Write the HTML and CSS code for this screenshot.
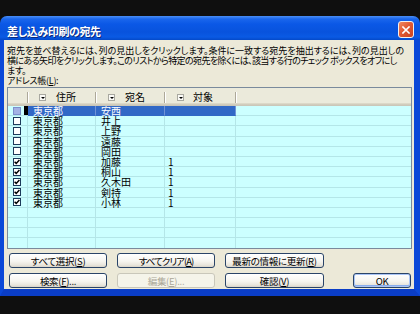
FILE: index.html
```html
<!DOCTYPE html>
<html lang="ja">
<head>
<meta charset="utf-8">
<title>差し込み印刷の宛先</title>
<link rel="stylesheet" href="styles.css">
</head>
<body>
<div class="screen">
  <div class="window">
    <div class="titlebar">
      <span class="title">差し込み印刷の宛先</span>
      <span class="close"><svg width="8" height="8" viewBox="0 0 8 8"><path d="M1 1L7 7M7 1L1 7" stroke="#fff" stroke-width="1.6" stroke-linecap="square"/></svg></span>
    </div>
    <div class="body">
      <p class="desc"><span class="ln1">宛先を並べ替えるには、列の見出しをクリックします。条件に一致する宛先を抽出するには、列の見出しの</span><br><span class="ln2">横にある矢印をクリックします。このリストから特定の宛先を除くには、該当する行のチェック ボックスをオフにし</span><br><span>ます。</span></p>
      <div class="label">アドレス帳(<u>L</u>):</div>
      <div class="list">
        <div class="head">
          <div class="hc"></div>
          <div class="hc h1"><span class="dd"></span><span>住所</span></div>
          <div class="hc h2"><span class="dd"></span><span>宛名</span></div>
          <div class="hc h3"><span class="dd"></span><span>対象</span></div>
          <div class="hc hlast"></div>
        </div>
        <div class="row sel">
          <div class="c c0"><span class="cb"></span><span class="bar"></span></div>
          <div class="c c1">東京都</div><div class="c c2">安西</div><div class="c c3"></div><div class="c c4"></div>
        </div>
        <div class="row">
          <div class="c c0"><span class="cb"></span></div>
          <div class="c c1">東京都</div><div class="c c2">井上</div><div class="c c3"></div><div class="c c4"></div>
        </div>
        <div class="row">
          <div class="c c0"><span class="cb"></span></div>
          <div class="c c1">東京都</div><div class="c c2">上野</div><div class="c c3"></div><div class="c c4"></div>
        </div>
        <div class="row">
          <div class="c c0"><span class="cb"></span></div>
          <div class="c c1">東京都</div><div class="c c2">遠藤</div><div class="c c3"></div><div class="c c4"></div>
        </div>
        <div class="row">
          <div class="c c0"><span class="cb"></span></div>
          <div class="c c1">東京都</div><div class="c c2">岡田</div><div class="c c3"></div><div class="c c4"></div>
        </div>
        <div class="row">
          <div class="c c0"><span class="cb"><svg width="6" height="6" viewBox="0 0 6 6"><path d="M0.6 2.8L2.2 4.4L5.4 1.1" fill="none" stroke="#000" stroke-width="1.5"/></svg></span></div>
          <div class="c c1">東京都</div><div class="c c2">加藤</div><div class="c c3">1</div><div class="c c4"></div>
        </div>
        <div class="row">
          <div class="c c0"><span class="cb"><svg width="6" height="6" viewBox="0 0 6 6"><path d="M0.6 2.8L2.2 4.4L5.4 1.1" fill="none" stroke="#000" stroke-width="1.5"/></svg></span></div>
          <div class="c c1">東京都</div><div class="c c2">桐山</div><div class="c c3">1</div><div class="c c4"></div>
        </div>
        <div class="row">
          <div class="c c0"><span class="cb"><svg width="6" height="6" viewBox="0 0 6 6"><path d="M0.6 2.8L2.2 4.4L5.4 1.1" fill="none" stroke="#000" stroke-width="1.5"/></svg></span></div>
          <div class="c c1">東京都</div><div class="c c2">久木田</div><div class="c c3">1</div><div class="c c4"></div>
        </div>
        <div class="row">
          <div class="c c0"><span class="cb"><svg width="6" height="6" viewBox="0 0 6 6"><path d="M0.6 2.8L2.2 4.4L5.4 1.1" fill="none" stroke="#000" stroke-width="1.5"/></svg></span></div>
          <div class="c c1">東京都</div><div class="c c2">剣持</div><div class="c c3">1</div><div class="c c4"></div>
        </div>
        <div class="row">
          <div class="c c0"><span class="cb"><svg width="6" height="6" viewBox="0 0 6 6"><path d="M0.6 2.8L2.2 4.4L5.4 1.1" fill="none" stroke="#000" stroke-width="1.5"/></svg></span></div>
          <div class="c c1">東京都</div><div class="c c2">小林</div><div class="c c3">1</div><div class="c c4"></div>
        </div>
        <div class="row"><div class="c c0"></div><div class="c c1"></div><div class="c c2"></div><div class="c c3"></div><div class="c c4"></div></div>
        <div class="row"><div class="c c0"></div><div class="c c1"></div><div class="c c2"></div><div class="c c3"></div><div class="c c4"></div></div>
        <div class="row"><div class="c c0"></div><div class="c c1"></div><div class="c c2"></div><div class="c c3"></div><div class="c c4"></div></div>
        <div class="row"><div class="c c0"></div><div class="c c1"></div><div class="c c2"></div><div class="c c3"></div><div class="c c4"></div></div>
      </div>
      <div class="buttons">
        <button class="btn">すべて選択(<u>S</u>)</button>
        <button class="btn tight">すべてクリア(<u>A</u>)</button>
        <button class="btn">最新の情報に更新(<u>R</u>)</button>
        <span></span>
        <button class="btn">検索(<u>F</u>)...</button>
        <button class="btn disabled">編集(<u>E</u>)...</button>
        <button class="btn">確認(<u>V</u>)</button>
        <button class="btn ok">OK</button>
      </div>
    </div>
  </div>
</div>
</body>
</html>
```
FILE: styles.css
```css
html, body {
  margin: 0;
  padding: 0;
}
body {
  width: 420px;
  height: 314px;
  overflow: hidden;
  background: #0f0f0f;
  font-family: "Noto Sans CJK JP", "Noto Sans", sans-serif;
  font-feature-settings: "palt";
  color: #000;
}
.screen {
  padding-top: 16px;
}
.window {
  width: 420px;
}
.titlebar {
  height: 24px;
  box-sizing: border-box;
  border-radius: 7px 7px 0 0;
  background: linear-gradient(#4a8ef5 0, #1a66ec 3px, #0b58e6 8px, #0853dd 16px, #0a5ae4 21px, #0449c8 24px);
  display: flex;
  justify-content: space-between;
  align-items: flex-start;
  padding: 0 6px 0 7px;
}
.title {
  color: #fff;
  font-weight: bold;
  font-size: 11px;
  line-height: 12px;
  letter-spacing: -0.4px;
  margin-top: 9px;
  text-shadow: 1px 1px 0 #0a2a80;
  white-space: nowrap;
}
.close {
  margin-top: 5px;
  width: 16px;
  height: 17px;
  box-sizing: border-box;
  border: 1px solid #f4f0ee;
  border-radius: 3px;
  background: linear-gradient(135deg, #ef8a62 0%, #e35a33 45%, #c8431f 100%);
  display: flex;
  align-items: center;
  justify-content: center;
}
.close svg {
  display: block;
}
.body {
  background: #ece9d8;
  border-left: 4px solid #0b48d8;
  border-right: 6px solid #0b48d8;
  border-bottom: 7px solid #0a3dc6;
  padding: 6px 2px 1px 3px;
}
.desc {
  margin: 0;
  font-size: 9px;
  line-height: 10px;
  letter-spacing: -0.3px;
  white-space: nowrap;
}
.ln1 {
  letter-spacing: 0;
}
.ln2 {
  letter-spacing: -0.6px;
}
.label {
  font-size: 9px;
  line-height: 10px;
  letter-spacing: -0.3px;
  white-space: nowrap;
}
.list {
  margin-top: 1px;
  height: 162px;
  box-sizing: border-box;
  border: 1px solid #7a8a9c;
  background: #ccffff;
  overflow: hidden;
}
.head {
  display: grid;
  grid-template-columns: 20px 68px 69px 71px 1fr;
  height: 18px;
}
.hc {
  display: flex;
  align-items: center;
  font-size: 10px;
  line-height: 12px;
  white-space: nowrap;
  background:
    linear-gradient(#aca899, #aca899) no-repeat right 0 top 4px / 1px 11px,
    linear-gradient(#fff, #fff) no-repeat left 0 top 4px / 1px 11px,
    linear-gradient(#ebeadb 0, #ebeadb 15px, #e2decd 15px, #d6d2c2 16px, #cbc7b8 17px);
}
.hc:first-child {
  background:
    linear-gradient(#aca899, #aca899) no-repeat right 0 top 4px / 1px 11px,
    linear-gradient(#ebeadb 0, #ebeadb 15px, #e2decd 15px, #d6d2c2 16px, #cbc7b8 17px);
}
.h1 {
  padding-left: 11px;
}
.h2, .h3 {
  padding-left: 12px;
}
.hlast {
  background:
    linear-gradient(#fff, #fff) no-repeat left 0 top 4px / 1px 11px,
    linear-gradient(#ebeadb 0, #ebeadb 15px, #e2decd 15px, #d6d2c2 16px, #cbc7b8 17px);
}
.dd {
  width: 7px;
  height: 7px;
  box-sizing: border-box;
  border: 1px solid #a8a8a0;
  background: #fafaf6;
  display: inline-flex;
  align-items: center;
  justify-content: center;
  margin-right: 10px;
  margin-top: 1px;
}
.h3 .dd {
  margin-right: 9px;
}
.dd::after {
  content: "";
  border-left: 2px solid transparent;
  border-right: 2px solid transparent;
  border-top: 2px solid #000;
}
.row {
  display: grid;
  grid-template-columns: 20px 68px 69px 71px 1fr;
  height: 10.2px;
  font-size: 10px;
  line-height: 9px;
}
.c {
  box-sizing: border-box;
  border-right: 1px solid #b4e6e8;
  border-bottom: 1px solid #b4e6e8;
  display: flex;
  align-items: center;
  white-space: nowrap;
}
.c4 {
  border-right: none;
}
.c0 {
  padding-left: 5px;
}
.c1, .c2 {
  padding-left: 5px;
}
.c3 {
  padding-left: 3px;
}
.cb {
  width: 8px;
  height: 8px;
  box-sizing: border-box;
  border: 1px solid #1c3a5a;
  background: #fff;
  display: inline-flex;
  align-items: center;
  justify-content: center;
}
.cb svg {
  display: block;
}
.sel .cb {
  background: #a3b2e4;
  border-color: #7c8fcc;
}
.sel .c0 {
  border-right: none;
}
.bar {
  width: 4px;
  align-self: stretch;
  margin-left: auto;
  background: #000;
}
.sel .c1, .sel .c2, .sel .c3 {
  background: #3168c6;
  color: #fff;
  border-right-color: #6f93d6;
  border-bottom-color: #3168c6;
}
.buttons {
  display: grid;
  grid-template-columns: 98px 98px 99px 1fr;
  column-gap: 10px;
  row-gap: 5px;
  margin-top: 4px;
  padding-left: 2px;
}
.btn {
  height: 15px;
  box-sizing: border-box;
  margin: 0;
  padding: 0;
  border: 1px solid #2a4468;
  border-radius: 3px;
  background: linear-gradient(#ffffff, #f6f5f0 55%, #e8e5dc 85%, #d9d4c8);
  font-family: "Noto Sans CJK JP", "Noto Sans", sans-serif;
  font-feature-settings: "palt";
  font-size: 9.5px;
  line-height: 10px;
  letter-spacing: -0.3px;
  color: #000;
  display: flex;
  align-items: center;
  justify-content: center;
  white-space: nowrap;
}
.btn.tight {
  letter-spacing: -1px;
}
.btn.disabled {
  color: #aca899;
  border-color: #c9c7ba;
  background: #f5f4ea;
}
.btn.ok {
  width: 58px;
  justify-self: end;
  margin-right: 1px;
  box-shadow: inset 0 0 0 1px #a9c4f5, inset 0 -1px 0 1px #8aaeee;
}
```
